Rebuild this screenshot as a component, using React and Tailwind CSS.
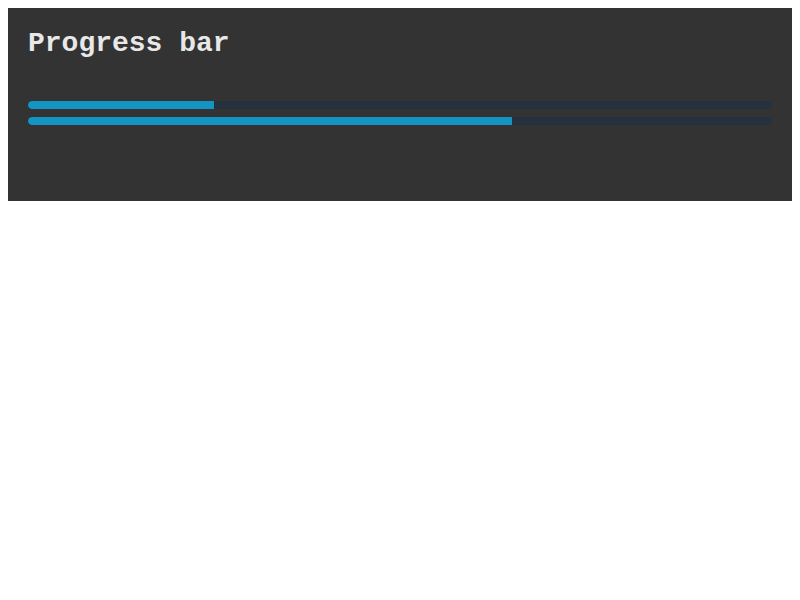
import React from 'react';

const bars = [25, 65];

export default function App() {
    return (
        <div className="p-2">
            <div className="bg-[#333333] px-5 pt-5 pb-[76px]" style={{ fontFamily: '"Liberation Mono", monospace' }}>
                <h1 className="text-[28px] font-bold text-[#e8e8e8] leading-[normal]">Progress bar</h1>
                <div className="mt-[42px] flex flex-col gap-2">
                    {bars.map((v, i) => (
                        <div key={i} className="h-2 w-full rounded-full bg-[#25323d] overflow-hidden">
                            <div className="h-full bg-[#1395c4] rounded-l-full" style={{ width: `${v}%` }}></div>
                        </div>
                    ))}
                </div>
            </div>
        </div>
    );
}
